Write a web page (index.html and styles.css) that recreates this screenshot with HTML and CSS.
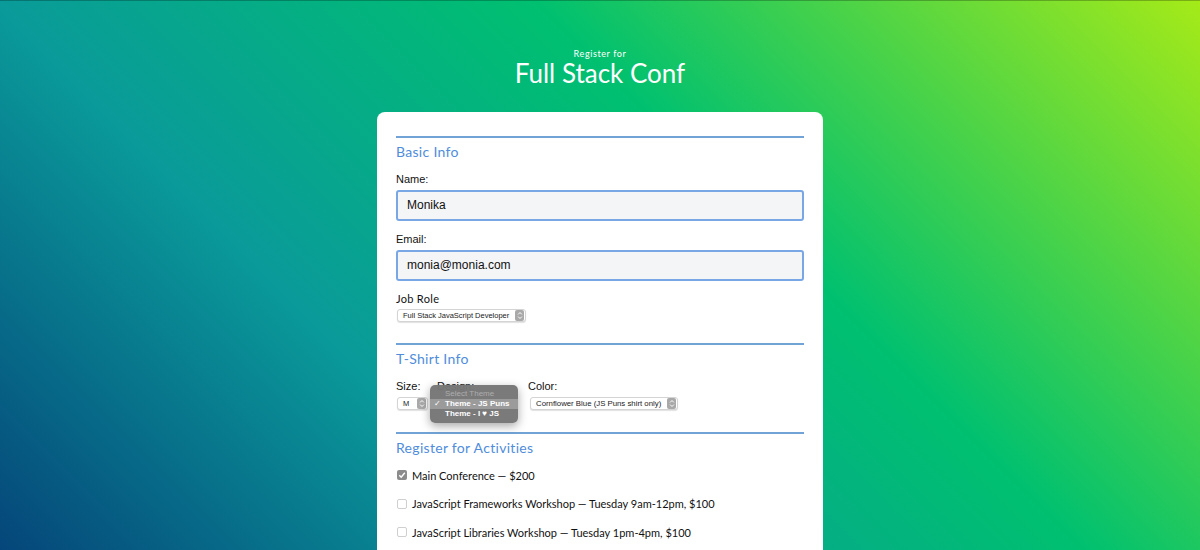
FILE: index.html
```html
<!DOCTYPE html>
<html lang="en">
<head>
<meta charset="utf-8">
<title>Register for Full Stack Conf</title>
<link rel="stylesheet" href="styles.css">
</head>
<body>
<div class="page">
  <header class="header">
    <p class="pre">Register for</p>
    <h1 class="title">Full Stack Conf</h1>
  </header>
  <form class="card">
    <section class="section">
      <h2 class="legend">Basic Info</h2>
      <label class="label">Name:</label>
      <div class="input">Monika</div>
      <label class="label">Email:</label>
      <div class="input">monia@monia.com</div>
      <label class="label round tight">Job Role</label>
      <div class="select job"><span class="sel-text">Full Stack JavaScript Developer</span><span class="arrow"><svg viewBox="0 0 8 12" width="6" height="9"><path d="M1.5 4.5 L4 2 L6.5 4.5 M1.5 7.5 L4 10 L6.5 7.5" fill="none" stroke="#fff" stroke-width="1.3"/></svg></span></div>
    </section>
    <section class="section">
      <h2 class="legend">T-Shirt Info</h2>
      <div class="shirt-row">
        <div class="field size">
          <label class="label">Size:</label>
          <div class="select small"><span class="sel-text">M</span><span class="arrow"><svg viewBox="0 0 8 12" width="6" height="9"><path d="M1.5 4.5 L4 2 L6.5 4.5 M1.5 7.5 L4 10 L6.5 7.5" fill="none" stroke="#fff" stroke-width="1.3"/></svg></span></div>
        </div>
        <div class="field design">
          <label class="label">Design:</label>
          <div class="select hidden"><span class="sel-text">Theme - JS Puns</span><span class="arrow"></span></div>
          <div class="popup">
            <div class="opt disabled">Select Theme</div>
            <div class="opt active"><span class="check">✓</span>Theme - JS Puns</div>
            <div class="opt">Theme - I <span class="heart">♥</span> JS</div>
          </div>
        </div>
        <div class="field color">
          <label class="label">Color:</label>
          <div class="select wide"><span class="sel-text">Cornflower Blue (JS Puns shirt only)</span><span class="arrow"><svg viewBox="0 0 8 12" width="6" height="9"><path d="M1.5 4.5 L4 2 L6.5 4.5 M1.5 7.5 L4 10 L6.5 7.5" fill="none" stroke="#fff" stroke-width="1.3"/></svg></span></div>
        </div>
      </div>
    </section>
    <section class="section">
      <h2 class="legend acts">Register for Activities</h2>
      <div class="activity"><span class="box checked"><svg viewBox="0 0 10 10" width="10" height="10"><path d="M2.3 5.2 L4.2 7.2 L7.8 2.8" fill="none" stroke="#fff" stroke-width="1.4"/></svg></span>Main Conference — $200</div>
      <div class="activity"><span class="box"></span>JavaScript Frameworks Workshop — Tuesday 9am-12pm, $100</div>
      <div class="activity"><span class="box"></span>JavaScript Libraries Workshop — Tuesday 1pm-4pm, $100</div>
      <div class="activity"><span class="box"></span>Express Workshop — Tuesday 9am-12pm, $100</div>
    </section>
  </form>
</div>
</body>
</html>
```
FILE: styles.css
```css
html {
  background: linear-gradient(45deg, #05467a 0%, #0a9a9a 31%, #00c070 62%, #a5ea18 100%) fixed;
  min-height: 100%;
}
body {
  margin: 0;
  font-family: "Lato", "Liberation Sans", sans-serif;
  color: #111;
  border-top: 1px solid rgba(0, 0, 0, 0.25);
}
.page {
  padding-top: 47px;
}
.header {
  text-align: center;
  color: #fff;
}
.pre {
  margin: 0;
  font-size: 9px;
  line-height: 12px;
  letter-spacing: 0.6px;
}
.title {
  margin: 0;
  font-weight: 400;
  font-size: 26px;
  line-height: 26px;
  letter-spacing: 0;
}
.card {
  display: block;
  width: 408px;
  margin: 26px auto 0;
  padding: 24px 19px 40px;
  background: #fff;
  border-radius: 8px;
}
.section {
  display: flex;
  flex-direction: column;
  align-items: stretch;
  border-top: 2px solid #72a3d6;
  padding-top: 5px;
  margin-bottom: 21px;
}
.legend {
  margin: 0 0 11px;
  font-size: 14px;
  line-height: 18px;
  font-weight: 400;
  color: #4f8ddc;
  letter-spacing: 0.3px;
}
.legend.acts {
  margin-bottom: 11px;
}
.label {
  display: block;
  font-family: "Liberation Sans", sans-serif;
  font-size: 11px;
  line-height: 14px;
  margin-bottom: 4px;
}
.label.round {
  font-family: "Lato", sans-serif;
  letter-spacing: 0.3px;
}
.label.tight {
  margin-bottom: 3px;
}
.input {
  box-sizing: border-box;
  height: 31px;
  border: 2px solid #79a7e6;
  border-radius: 3px;
  background: #f4f5f7;
  padding: 0 9px;
  font-family: "Liberation Sans", sans-serif;
  font-size: 12px;
  line-height: 27px;
  color: #111;
  margin-bottom: 11px;
}
.select {
  box-sizing: border-box;
  display: flex;
  align-items: center;
  justify-content: space-between;
  height: 13px;
  border: 1px solid #d4d4d4;
  border-radius: 3px;
  background: #fff;
  box-shadow: 0 1px 1px rgba(0, 0, 0, 0.12);
  padding-left: 5px;
  font-family: "Liberation Sans", sans-serif;
  font-size: 7.5px;
  color: #222;
  align-self: flex-start;
}
.select.job {
  margin-left: 1px;
}
.select.small {
  width: 31px;
  margin-left: 1px;
}
.select.wide {
  font-size: 7.8px;
}
.select.hidden {
  visibility: hidden;
}
.sel-text {
  padding-right: 6px;
  white-space: nowrap;
}
.arrow {
  display: flex;
  align-items: center;
  justify-content: center;
  width: 9px;
  height: 11px;
  margin-right: 1px;
  border-radius: 2px;
  background: #a9a9a9;
}
.shirt-row {
  display: flex;
  padding-bottom: 1px;
}
.field {
  position: relative;
  display: flex;
  flex-direction: column;
}
.field.size {
  width: 32px;
  margin-right: 9px;
}
.field.design {
  width: 82px;
  margin-right: 9px;
}
.field.color .select {
  margin-left: 2px;
}
.popup {
  position: absolute;
  left: -7px;
  top: 6px;
  width: 88px;
  padding: 4px 0;
  border-radius: 5px;
  background: rgba(118, 118, 118, 0.97);
  box-shadow: 0 3px 10px rgba(0, 0, 0, 0.35);
  font-family: "Liberation Sans", sans-serif;
  font-size: 8px;
  font-weight: 700;
  color: #fff;
}
.opt {
  height: 10px;
  line-height: 10px;
  padding-left: 15px;
  position: relative;
  white-space: nowrap;
}
.opt.disabled {
  color: #adadad;
  font-weight: 400;
}
.opt.active {
  background: #9b9b9b;
}
.check {
  position: absolute;
  left: 4px;
  font-weight: 400;
}
.heart {
  font-size: 8px;
}
.activity {
  display: flex;
  align-items: center;
  height: 14px;
  margin-bottom: 14.5px;
  font-size: 11px;
  letter-spacing: 0;
}
.box {
  box-sizing: border-box;
  width: 10px;
  height: 10px;
  margin: 0 5px 0 1px;
  border: 1px solid #cfcfcf;
  border-radius: 2px;
  background: #fff;
  display: flex;
}
.box.checked {
  border: none;
  background: #8c8c8c;
}
```
